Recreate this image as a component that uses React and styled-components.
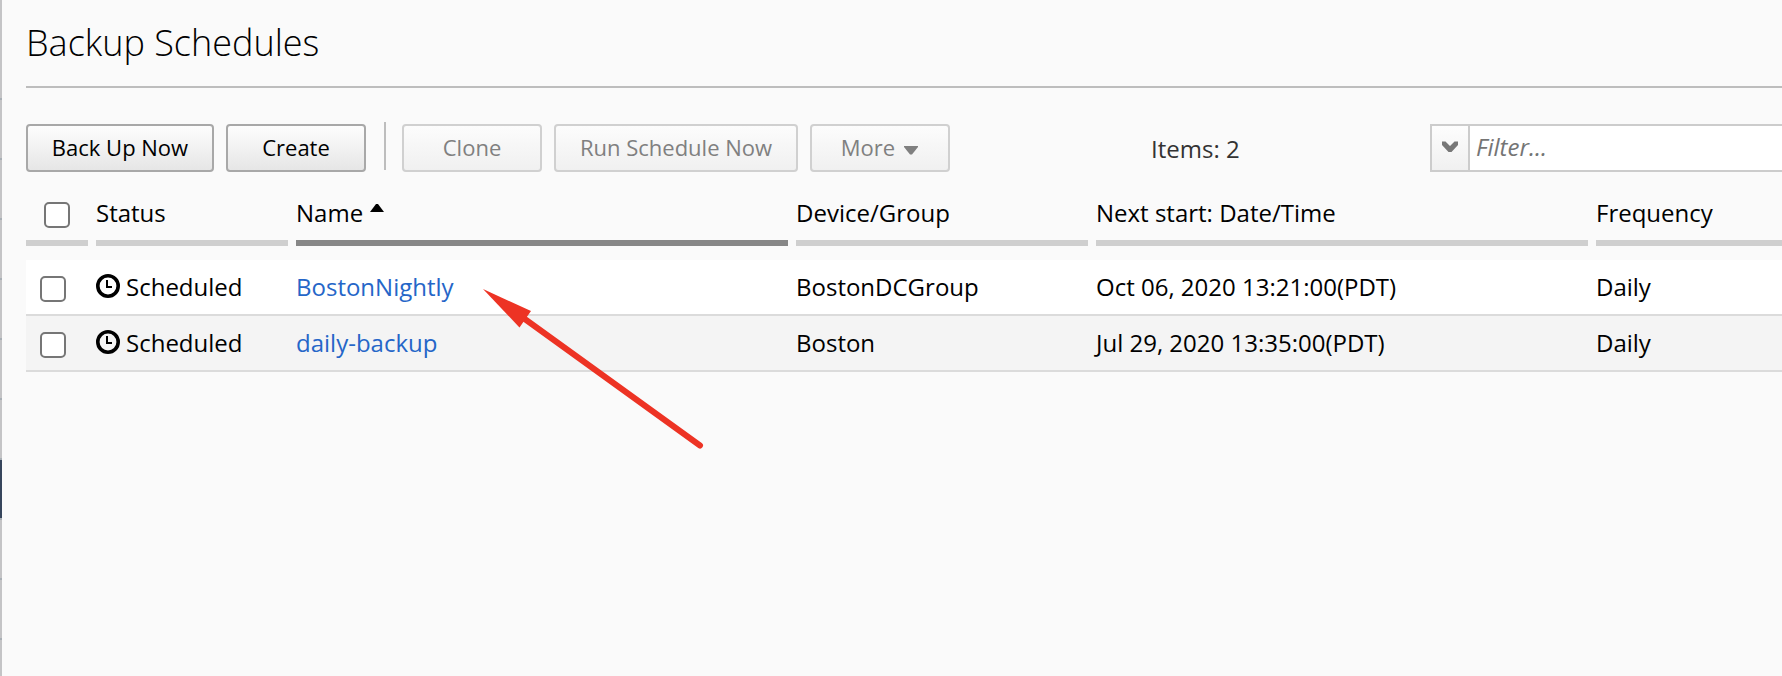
import React from 'react';
import styled, { createGlobalStyle } from 'styled-components';

const Global = createGlobalStyle`
  *, *::before, *::after { box-sizing: border-box; }
  body {
    margin: 0;
    background: #fafafa;
    color: #000;
    font-family: "Open Sans", "Noto Sans", sans-serif;
    font-size: 24px;
    overflow: hidden;
  }
`;

const Page = styled.div`
  display: flex;
  width: 100vw;
  height: 100vh;
  overflow: hidden;
`;

const Rail = styled.nav`
  flex: none;
  width: 2px;
  height: 100%;
  display: flex;
  flex-direction: column;
  overflow: hidden;
  background: #c4c4c6;
  padding-top: 40px;
`;

const RailItem = styled.div`
  flex: none;
  height: 60px;
  border-bottom: 2px solid #a9afb5;
  background: ${(p) => (p.$active ? '#36455c' : '#c4c4c6')};
`;

const Main = styled.main`
  flex: 1;
  min-width: 0;
  padding-left: 24px;
`;

const Title = styled.h1`
  margin: 0;
  height: 88px;
  padding-top: 18px;
  border-bottom: 2px solid #bdbdbd;
  font-size: 36px;
  font-weight: 300;
  line-height: 50px;
`;

const Toolbar = styled.div`
  display: flex;
  align-items: flex-start;
  padding-top: 36px;
  height: 108px;
`;

const Button = styled.button`
  flex: none;
  width: ${(p) => p.$width}px;
  height: 48px;
  margin: 0 12px 0 0;
  padding: 0 0 2px;
  display: flex;
  align-items: center;
  justify-content: center;
  gap: 8px;
  border: 2px solid #a8a8a8;
  border-radius: 4px;
  background: linear-gradient(#fdfdfd, #e6e6e6);
  color: #000;
  font: inherit;
  font-size: 22px;
  white-space: nowrap;

  &:disabled {
    border-color: #d0d0d0;
    background: linear-gradient(#fcfcfc, #f0f0f0);
    color: #808080;
  }
`;

const MenuMark = styled.svg`
  margin-top: 6px;
`;

const Separator = styled.div`
  width: 2px;
  height: 48px;
  margin: -2px 16px 0 6px;
  background: #bdbdbd;
`;

const Count = styled.div`
  width: 279px;
  margin-left: 189px;
  padding-top: 1px;
  color: #333;
  line-height: 48px;
`;

const Filter = styled.div`
  flex: 1;
  display: flex;
  height: 48px;
  border: 2px solid #ccc;
  border-right: 0;
  background: #fff;
`;

const FilterToggle = styled.button`
  width: 38px;
  padding: 0 0 2px;
  display: flex;
  align-items: center;
  justify-content: center;
  border: 0;
  border-right: 2px solid #ccc;
  background: linear-gradient(#fdfdfd, #f0f0f0);
`;

const FilterInput = styled.input`
  flex: 1;
  min-width: 0;
  padding: 0 0 4px 6px;
  border: 0;
  outline: 0;
  background: transparent;
  font: inherit;
  font-style: italic;

  &::placeholder { color: #757575; opacity: 1; }
`;

const columns = '62px 192px 492px 292px 492px 1fr';

const HeaderRow = styled.div`
  display: grid;
  grid-template-columns: ${columns};
  column-gap: 8px;
  height: 50px;
  margin-bottom: 14px;
`;

const HeaderCell = styled.div`
  display: flex;
  gap: 7px;
  padding-left: ${(p) => p.$indent || 0}px;
  padding-top: ${(p) => (p.$indent ? 6 : 0)}px;
  border-bottom: 6px solid ${(p) => (p.$sorted ? '#878787' : '#cfcfcf')};
  line-height: 34px;
  white-space: nowrap;
`;

const SortMark = styled.svg`
  margin-top: 8px;
`;

const Row = styled.div`
  display: grid;
  grid-template-columns: ${columns};
  column-gap: 8px;
  height: 56px;
  border-bottom: 2px solid #dbdbdb;
  background: ${(p) => (p.$alt ? '#f4f4f4' : '#fff')};
  line-height: 54px;
  white-space: nowrap;
`;

const Cell = styled.div`
  display: flex;
  gap: 6px;
  padding-left: ${(p) => p.$indent || 0}px;
  padding-top: ${(p) => (p.$indent ? 16 : 0)}px;
`;

const Link = styled.a`
  color: #2566c8;
  text-decoration: none;
`;

const Checkbox = styled.input.attrs({ type: 'checkbox' })`
  appearance: none;
  width: 26px;
  height: 26px;
  margin: 0;
  border: 2px solid #767676;
  border-radius: 5px;
  background: #fff;
`;

const ClockSvg = styled.svg`
  flex: none;
  margin-top: 14px;
`;

const Arrow = styled.svg`
  position: absolute;
  left: 480px;
  top: 285px;
  pointer-events: none;
`;

const Clock = () => (
  <ClockSvg width="24" height="24" viewBox="0 0 24 24" fill="none" stroke="#000">
    <circle cx="12" cy="12" r="10.2" strokeWidth="3.6" />
    <path d="M11 6v7h5" strokeWidth="2" />
  </ClockSvg>
);

const schedules = [
  { name: 'BostonNightly', group: 'BostonDCGroup', next: 'Oct 06, 2020 13:21:00(PDT)', frequency: 'Daily' },
  { name: 'daily-backup', group: 'Boston', next: 'Jul 29, 2020 13:35:00(PDT)', frequency: 'Daily' },
];

export default function App() {
  return (
    <Page>
      <Global />
      <Rail>
        {Array.from({ length: 11 }, (_, i) => (
          <RailItem key={i} $active={i === 7} />
        ))}
      </Rail>
      <Main>
        <Title>Backup Schedules</Title>
        <Toolbar>
          <Button $width={188}>Back Up Now</Button>
          <Button $width={140}>Create</Button>
          <Separator />
          <Button $width={140} disabled>Clone</Button>
          <Button $width={244} disabled>Run Schedule Now</Button>
          <Button $width={140} disabled>
            More
            <MenuMark width="16" height="9" viewBox="0 0 16 9"><path d="M1 0h14v1L9 8.500H7L1 1z" fill="#808080" /></MenuMark>
          </Button>
          <Count>Items: 2</Count>
          <Filter>
            <FilterToggle aria-label="Filter options">
              <svg width="18" height="12" viewBox="0 0 18 12"><path d="M1 0.500h3.500L9 5l4.500-4.500H17V4l-6.500 7h-3L1 4z" fill="#777" /></svg>
            </FilterToggle>
            <FilterInput placeholder="Filter..." />
          </Filter>
        </Toolbar>
        <HeaderRow>
          <HeaderCell $indent={18}><Checkbox /></HeaderCell>
          <HeaderCell>Status</HeaderCell>
          <HeaderCell $sorted>
            Name
            <SortMark width="14" height="8" viewBox="0 0 14 8"><path d="M0 8l6-8h2l6 8z" /></SortMark>
          </HeaderCell>
          <HeaderCell>Device/Group</HeaderCell>
          <HeaderCell>Next start: Date/Time</HeaderCell>
          <HeaderCell>Frequency</HeaderCell>
        </HeaderRow>
        {schedules.map((s, i) => (
          <Row key={s.name} $alt={i % 2 === 1}>
            <Cell $indent={14}><Checkbox /></Cell>
            <Cell><Clock />Scheduled</Cell>
            <Cell><Link>{s.name}</Link></Cell>
            <Cell>{s.group}</Cell>
            <Cell>{s.next}</Cell>
            <Cell>{s.frequency}</Cell>
          </Row>
        ))}
      </Main>
      <Arrow width="226" height="168" viewBox="0 0 226 168">
        <path d="M42 32L220 160.500" stroke="#ed3324" strokeWidth="6" strokeLinecap="round" />
        <path d="M3 4L51 26L39.500 42.500z" fill="#ed3324" />
      </Arrow>
    </Page>
  );
}
